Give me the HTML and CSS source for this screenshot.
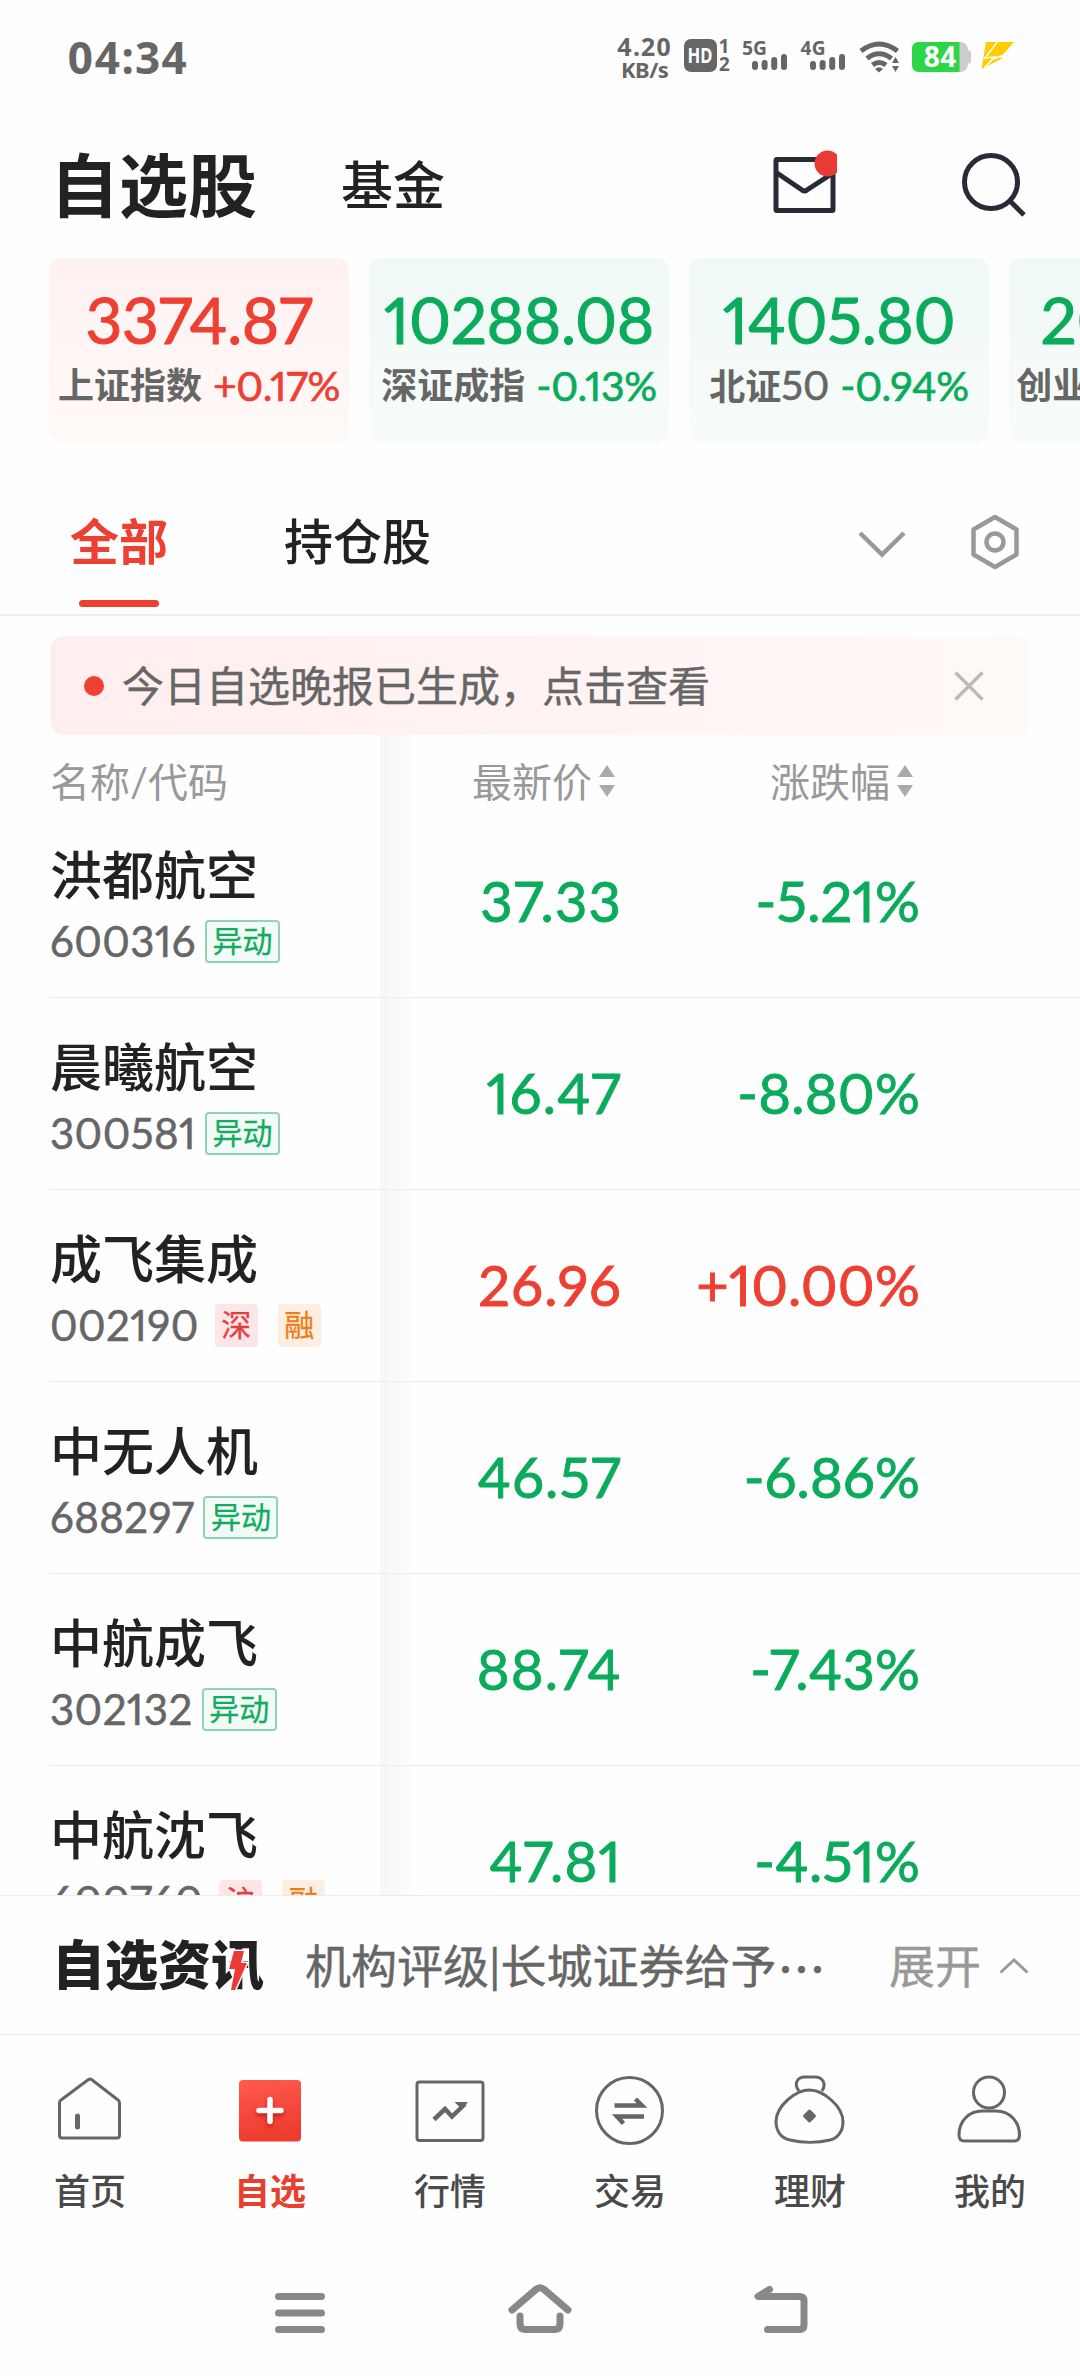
FILE: index.html
```html
<!DOCTYPE html>
<html lang="zh-CN">
<head>
<meta charset="utf-8">
<title>自选股</title>
<link rel="stylesheet" href="styles.css">
</head>

<body>

<div class="statusbar">
	<span class="clock">04:34</span>
	<div class="speed"><span>4.20</span><span>KB/s</span></div>
	<svg class="sys-icons" width="340" height="50" viewBox="680 35 340 50">
		<!-- HD voice, both SIMs -->
		<rect x="684" y="41" width="33" height="33" rx="7" fill="#666"/>
		<text x="687.5" y="65" class="hd" textLength="25" lengthAdjust="spacingAndGlyphs">HD</text>
		<text x="719.5" y="54.500" class="sim">1</text>
		<text x="719" y="73" class="sim">2</text>
		<!-- signal -->
		<text x="742" y="57" class="net" textLength="25" lengthAdjust="spacingAndGlyphs">5G</text>
		<g stroke="#666" stroke-width="6" stroke-linecap="round">
			<path d="M755 66V69M764.600 65V69M774.200 62V69M784 59V69"/>
			<path d="M813 66V69M822.600 65V69M832.200 62V69M842 59V69"/>
		</g>
		<text x="800.500" y="57" class="net" textLength="25" lengthAdjust="spacingAndGlyphs">4G</text>
		<!-- wifi -->
		<g fill="none" stroke="#666" stroke-width="5">
			<path d="M861 53Q879 39 897.500 53"/>
			<path d="M867 60.500Q879 51 891.500 60.500"/>
			<path d="M872.500 67Q879 62 886 67"/>
		</g>
		<path d="M875 71Q879 67.500 883 71L879 74.500Z" fill="#666"/>
		<path d="M892 65L895.500 59L899 65ZM892 68L895.500 74L899 68Z" fill="#666"/>
		<!-- battery -->
		<rect x="912" y="44" width="56" height="30" rx="8" fill="#ccc"/>
		<rect x="966" y="52.500" width="5" height="13" rx="2" fill="#ccc"/>
		<path d="M919 44H959.500V74H919Q912 74 912 67V51Q912 44 919 44Z" fill="#2bd745"/>
		<text x="923.500" y="69" class="level">84</text>
		<path d="M986 44H1014L1000 60H1003L981.500 71Z" fill="#fc0"/>
		<path d="M998 43L985 60L995 59L984 70M1004 57L991 62" stroke="#fff" stroke-width="1.500" fill="none"/>
	</svg>
</div>

<div class="topbar">
	<h1>自选股</h1>
	<span class="fund">基金</span>
	<svg class="mail" width="66" height="66" viewBox="771 148 66 66" fill="none" stroke="#272b35" stroke-width="5">
		<rect x="776" y="157.500" width="57" height="51" rx="1"/>
		<path d="M777 171L802 188Q804.500 190 807 188L833 171"/>
		<circle cx="827.500" cy="161.500" r="13" fill="#e93a36" stroke="none"/>
	</svg>
	<svg class="search" width="66" height="70" viewBox="960 148 66 70" fill="none" stroke="#272b35" stroke-width="5">
		<circle cx="991" cy="181" r="26.500"/>
		<path d="M1010 200L1024 214"/>
	</svg>
</div>

<div class="indexes">
	<div class="card red">
		<div class="point">3374.87</div>
		<div class="info"><span class="label">上证指数</span><span class="rate">+0.17%</span></div>
	</div>
	<div class="card green">
		<div class="point">10288.08</div>
		<div class="info"><span class="label">深证成指</span><span class="rate">-0.13%</span></div>
	</div>
	<div class="card green">
		<div class="point">1405.80</div>
		<div class="info"><span class="label">北证<i>50</i></span><span class="rate">-0.94%</span></div>
	</div>
	<div class="card green">
		<div class="point">2034.25</div>
		<div class="info"><span class="label">创业板指</span><span class="rate">-0.38%</span></div>
	</div>
</div>

<div class="groups">
	<span class="group active">全部</span>
	<span class="group">持仓股</span>
	<svg class="more" width="50" height="30" viewBox="0 0 50 30" fill="none" stroke="#999" stroke-width="4.500">
		<path d="M3 3L25 24.500L47 3"/>
	</svg>
	<svg class="setting" width="50" height="58" viewBox="0 0 50 58" fill="none" stroke="#999" stroke-width="4.500">
		<path d="M25 4L46.500 16.500V41.500L25 54L3.500 41.500V16.500Z" stroke-linejoin="round"/>
		<circle cx="25" cy="29" r="8.500"/>
	</svg>
</div>

<div class="notice">
	<span class="dot"></span>
	<span class="notice-text">今日自选晚报已生成，点击查看</span>
	<svg class="close" width="30" height="30" viewBox="0 0 30 30" stroke="#bbb" stroke-width="3.500">
		<path d="M1.500 1.500L28.500 28.500M28.500 1.500L1.500 28.500"/>
	</svg>
</div>

<div class="stocks">
	<div class="thead">
		<span class="c-name">名称/代码</span>
		<span class="c-price">最新价<svg width="16" height="32" viewBox="0 0 16 32" fill="#aaa"><path d="M8 0L16 12H0ZM8 32L16 20H0Z"/></svg></span>
		<span class="c-rate">涨跌幅<svg width="16" height="32" viewBox="0 0 16 32" fill="#aaa"><path d="M8 0L16 12H0ZM8 32L16 20H0Z"/></svg></span>
	</div>

	<div class="row down">
		<div class="c-name">
			<div class="name">洪都航空</div>
			<div class="code">600316<span class="tag move">异动</span></div>
		</div>
		<span class="c-price">37.33</span>
		<span class="c-rate">-5.21%</span>
	</div>
	<div class="row down">
		<div class="c-name">
			<div class="name">晨曦航空</div>
			<div class="code">300581<span class="tag move">异动</span></div>
		</div>
		<span class="c-price">16.47</span>
		<span class="c-rate">-8.80%</span>
	</div>
	<div class="row up">
		<div class="c-name">
			<div class="name">成飞集成</div>
			<div class="code">002190<span class="tag market">深</span><span class="tag margin">融</span></div>
		</div>
		<span class="c-price">26.96</span>
		<span class="c-rate">+10.00%</span>
	</div>
	<div class="row down">
		<div class="c-name">
			<div class="name">中无人机</div>
			<div class="code">688297<span class="tag move">异动</span></div>
		</div>
		<span class="c-price">46.57</span>
		<span class="c-rate">-6.86%</span>
	</div>
	<div class="row down">
		<div class="c-name">
			<div class="name">中航成飞</div>
			<div class="code">302132<span class="tag move">异动</span></div>
		</div>
		<span class="c-price">88.74</span>
		<span class="c-rate">-7.43%</span>
	</div>
	<div class="row down">
		<div class="c-name">
			<div class="name">中航沈飞</div>
			<div class="code">600760<span class="tag market">沪</span><span class="tag margin">融</span></div>
		</div>
		<span class="c-price">47.81</span>
		<span class="c-rate">-4.51%</span>
	</div>
</div>

<div class="news">
	<span class="news-title">自选资讯<svg width="22" height="43" viewBox="-2 -2 22 43"><path d="M5 0H15L12 12H18L6 39H2L6 18H0Z" fill="#e93a34" stroke="#fefefe" stroke-width="3" paint-order="stroke"/></svg></span>
	<span class="news-text">机构评级|长城证券给予<b>···</b></span>
	<span class="expand">展开</span>
	<svg width="30" height="18" viewBox="0 0 30 18" fill="none" stroke="#999" stroke-width="3"><path d="M1.500 15.500L15 3L28.500 15.500"/></svg>
</div>

<div class="tabbar">
	<div class="tab">
		<svg width="76" height="76" viewBox="0 0 76 76" class="line">
			<path d="M9 27L36.500 6.500Q38 5.500 39.500 6.500L66 27Q67.500 28 67.500 30V62Q67.500 65 65 65H10Q7.500 65 7.500 62V30Q7.500 28 9 27Z"/>
			<path d="M25.500 43V54" stroke-width="5" stroke-linecap="round"/>
		</svg>
		<span>首页</span>
	</div>
	<div class="tab on">
		<svg width="76" height="76" viewBox="0 0 76 76">
			<defs>
				<linearGradient id="plusBg" x1="0" y1="0" x2="0.200" y2="1">
					<stop offset="0" stop-color="#ff5a4f"/>
					<stop offset="1" stop-color="#ed3c2f"/>
				</linearGradient>
			</defs>
			<rect x="7" y="7" width="62" height="61.500" rx="4" fill="url(#plusBg)"/>
			<path class="plus" d="M38 26.500V48.500M27 37.500H49"/>
		</svg>
		<span>自选</span>
	</div>
	<div class="tab">
		<svg width="76" height="76" viewBox="0 0 76 76" class="line">
			<rect x="5" y="9" width="66" height="58.500" rx="2.500"/>
			<path d="M22 46.500L33 36L40 43.500L53 31" stroke-width="4.500"/>
			<path d="M42.500 29H56L50 36.500L46.500 33Z" fill="#666" stroke="none"/>
		</svg>
		<span>行情</span>
	</div>
	<div class="tab">
		<svg width="76" height="76" viewBox="0 0 76 76" class="line">
			<circle cx="37.500" cy="37.500" r="33"/>
			<path d="M22.500 32.500H50L43.500 26M52 43.500H25L31.500 50.500" stroke-width="4.500"/>
		</svg>
		<span>交易</span>
	</div>
	<div class="tab">
		<svg width="76" height="76" viewBox="0 0 76 76" class="line">
			<path d="M37.500 17C51 17 71 33 71 49C71 58 66 65 58 67C46 70 30 70 18 67C9 65 4 58 4 48C5 32 24 17 37.500 17Z"/>
			<path d="M27 18C21 10 26 4 33 4H43C50 4 55 10 50 18"/>
			<path d="M37.500 38L42.500 43L37.500 48L32.500 43Z" fill="#666" stroke-linejoin="round"/>
		</svg>
		<span>理财</span>
	</div>
	<div class="tab">
		<svg width="76" height="76" viewBox="0 0 76 76" class="line">
			<circle cx="37" cy="19.500" r="15.500"/>
			<path d="M30 38H44C57 38 67.500 48 67.500 62Q67.500 68 62 68H12.500Q7 68 7 62C7 48 17 38 30 38Z"/>
		</svg>
		<span>我的</span>
	</div>
</div>

<div class="navbar">
	<svg width="50" height="60" viewBox="0 0 50 60"><path d="M3.500 13.500H46.500M3.500 30H46.500M3.500 46.500H46.500"/></svg>
	<svg width="64" height="60" viewBox="0 0 64 60"><path d="M4 27L28.500 6Q32 3.500 35.500 6L60 27M12 33V41Q12 46.500 17.500 46.500H46.500Q52 46.500 52 41V33"/></svg>
	<svg width="54" height="60" viewBox="0 0 54 60"><path d="M15.500 6.500L4 13.500H45.500Q50 13.500 50 18V42Q50 46.500 45.500 46.500H13.500"/></svg>
</div>

</body>
</html>
```
FILE: styles.css
```css
* {
	box-sizing: border-box;
}
body {
	margin: 0;
	width: 1080px;
	height: 2376px;
	overflow: hidden;
	background-color: #fefefe;
	color: #222;
	font-family: "Lato", "Noto Sans CJK SC", sans-serif;
	font-variant-numeric: proportional-nums;
	line-height: 1;
}
svg {
	display: block;
	flex: none;
}
i, b {
	font-style: normal;
	font-weight: 400;
}

/* status bar */
.statusbar {
	display: flex;
	align-items: center;
	height: 116px;
	padding: 0 60px 0 67px;
	color: #666;
	font-family: "Noto Sans", "Noto Sans CJK SC", sans-serif;
	font-weight: 700;
}
.clock {
	flex: 1;
	margin-top: -2px;
	font-size: 44px;
	letter-spacing: 1.2px;
}
.speed {
	display: flex;
	flex-direction: column;
	align-items: center;
	margin: 0 8px 0 0;
	font-size: 25px;
	line-height: 23px;
	letter-spacing: 1px;
}
.speed span + span {
	font-size: 22px;
	letter-spacing: -0.5px;
}
.sys-icons text {
	fill: #666;
}
.sys-icons .hd {
	font-size: 21px;
	fill: #fff;
}
.sys-icons .sim {
	font-size: 19px;
}
.sys-icons .net {
	font-size: 20px;
}
.sys-icons .level {
	font-size: 28px;
	fill: #fff;
}

/* title */
.topbar {
	display: flex;
	align-items: center;
	height: 142px;
	padding: 0 54px 4px 50px;
}
h1 {
	margin: 0;
	font-size: 69px;
	font-weight: 700;
}
.fund {
	flex: 1;
	margin-left: 84px;
	font-size: 52px;
	font-weight: 500;
}
.mail {
	margin: -4px 123px 0 0;
}
.search {
	margin-top: -2px;
}

/* index cards */
.indexes {
	display: flex;
	gap: 20px;
	height: 185px;
	padding-left: 49px;
	overflow: hidden;
}
.card {
	flex: 0 0 300px;
	padding-top: 26px;
	border-radius: 13px;
	text-align: center;
	white-space: nowrap;
}
.red {
	background: linear-gradient(#fef2f1, #fff9f8);
	color: #ed4033;
}
.green {
	background: linear-gradient(#eff9f5, #f7fcfa);
	color: #0bab5c;
}
.point {
	font-size: 64px;
	height: 74px;
	line-height: 72px;
	letter-spacing: -0.4px;
	-webkit-text-stroke: 1px;
}
.info {
	display: flex;
	align-items: center;
	justify-content: center;
	height: 54px;
}
.label {
	color: #666;
	font-size: 36px;
	font-weight: 700;
}
.label i {
	font-size: 40px;
	-webkit-text-stroke: 0.6px;
}
.rate {
	margin-left: 11px;
	font-size: 41px;
	letter-spacing: -0.3px;
	-webkit-text-stroke: 0.7px;
}

/* groups */
.groups {
	display: flex;
	align-items: center;
	height: 173px;
	padding: 26px 60px 0 70px;
	border-bottom: 2px solid #efefef;
}
.group {
	position: relative;
	font-size: 49px;
	font-weight: 500;
}
.group + .group {
	flex: 1;
	margin-left: 116px;
}
.active {
	color: #ed4033;
	font-weight: 700;
}
.active::after {
	content: "";
	position: absolute;
	left: 9px;
	top: 83px;
	width: 80px;
	height: 7px;
	border-radius: 4px;
	background-color: #ed4033;
}
.more {
	margin: 6px 63px 0 0;
}

/* notice */
.notice {
	display: flex;
	align-items: center;
	height: 99px;
	margin: 20px 50px 0;
	padding: 1px 46px 0 34px;
	border-radius: 14px;
	background: linear-gradient(90deg, #ffeeee, #fff9f8);
	color: #666;
}
.dot {
	width: 20px;
	height: 20px;
	margin-right: 18px;
	border-radius: 50%;
	background-color: #ef4032;
}
.notice-text {
	flex: 1;
	font-size: 42px;
	-webkit-text-stroke: 0.4px;
}

/* stock table */
.stocks {
	height: 1160px;
	overflow: hidden;
	background: linear-gradient(90deg, #f6f6f6, #fefefe) 380px 0 / 37px 100% no-repeat;
}
.thead {
	display: flex;
	height: 71px;
	padding: 27px 0 0 50px;
	font-size: 40px;
	color: #999;
}
.thead .c-price, .thead .c-rate {
	display: flex;
	justify-content: flex-end;
	padding-right: 7px;
}
.thead svg {
	margin: 3px 0 0 7px;
}
.c-name {
	flex: 0 0 330px;
}
.c-price {
	flex: 0 0 242px;
	text-align: right;
}
.c-rate {
	flex: 0 0 298px;
	text-align: right;
}
.row {
	display: flex;
	height: 192px;
	margin-left: 50px;
	border-bottom: 1px solid #ededed;
}
.row > .c-price, .row > .c-rate {
	padding-top: 67px;
	font-size: 56px;
	-webkit-text-stroke: 0.9px;
}
.row > .c-price {
	letter-spacing: 1.2px;
}
.row > .c-rate {
	letter-spacing: 0.2px;
}
.down {
	color: #0bab5c;
}
.up {
	color: #ed4033;
}
.name {
	margin-top: 43px;
	color: #222;
	font-size: 52px;
	font-weight: 500;
}
.code {
	display: flex;
	align-items: center;
	height: 44px;
	margin-top: 18px;
	color: #666;
	font-size: 42px;
	letter-spacing: 0.4px;
	-webkit-text-stroke: 0.5px;
}
.tag {
	height: 43px;
	border-radius: 4px;
	padding: 0 6.5px;
	font-size: 30px;
	line-height: 40px;
	letter-spacing: 0;
	-webkit-text-stroke: 0.3px;
}
.move {
	margin-left: 9px;
	padding: 0 5.5px;
	border: 2px solid #90d5b3;
	background-color: #f3fbf7;
	color: #12ab5f;
	line-height: 37px;
}
.market {
	margin-left: 16px;
	background-color: #fce6e8;
	color: #e2403f;
}
.margin {
	margin-left: 20px;
	background-color: #fdeee1;
	color: #e9801a;
}

/* news strip */
.news {
	display: flex;
	align-items: center;
	height: 140px;
	padding: 1px 51px 0 52px;
	border-top: 1px solid #ebebeb;
	border-bottom: 1px solid #ebebeb;
	background-color: #fefefe;
}
.news-title {
	position: relative;
	margin-top: -3px;
	font-size: 53px;
	font-weight: 900;
}
.news-title svg {
	position: absolute;
	right: 15px;
	top: 11px;
}
.news-text {
	flex: 1;
	margin-left: 41px;
	color: #666;
	font-size: 46px;
	white-space: nowrap;
	-webkit-text-stroke: 0.4px;
}
.news-text b {
	margin-left: 3px;
	letter-spacing: 4px;
}
.expand {
	margin-right: 18px;
	color: #999;
	font-size: 46px;
	-webkit-text-stroke: 0.4px;
}

/* tab bar */
.tabbar {
	display: flex;
	height: 212px;
	padding-top: 38px;
}
.tab {
	flex: 1;
	display: flex;
	flex-direction: column;
	align-items: center;
	gap: 24px;
	color: #4a4a4a;
	font-size: 36px;
	font-weight: 500;
}
.on {
	color: #e8402f;
	font-weight: 700;
}
.line {
	fill: none;
	stroke: #666;
	stroke-width: 3;
}
.plus {
	stroke: #fff;
	stroke-width: 5.5;
	stroke-linecap: round;
	filter: drop-shadow(0 3px 2px #c41f15);
}

/* system navigation */
.navbar {
	display: flex;
	height: 130px;
	padding: 36px 0 0 275px;
}
.navbar svg {
	fill: none;
	stroke: #888;
	stroke-width: 7;
	stroke-linecap: round;
	stroke-linejoin: round;
}
.navbar svg:nth-child(2) {
	margin: 0 182px 0 183px;
}
```
